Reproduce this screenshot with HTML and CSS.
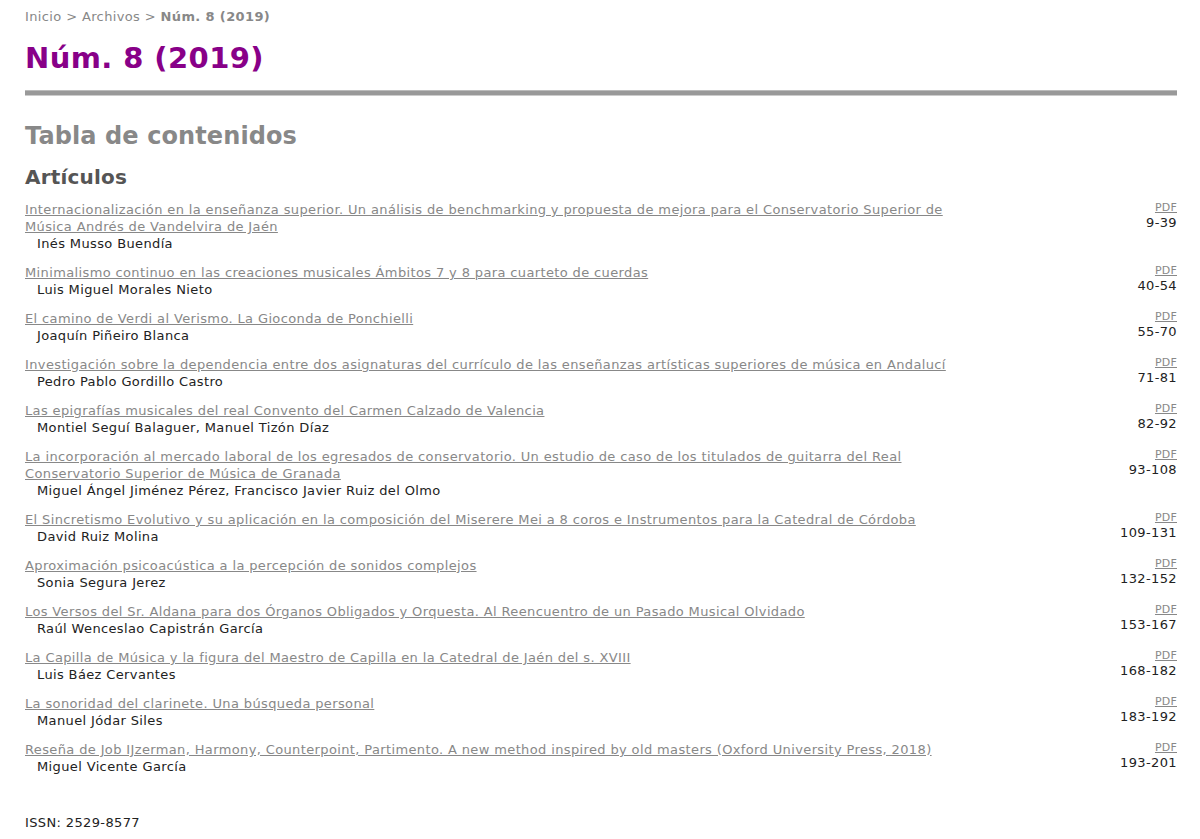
FILE: index.html
```html
<!DOCTYPE html>
<html lang="es">
<head>
<meta charset="utf-8">
<title>Núm. 8 (2019)</title>
<link rel="stylesheet" href="styles.css">
</head>
<body>
<div class="page">
  <div class="breadcrumb">
    <a href="#">Inicio</a> <span class="sep">&gt;</span> <a href="#">Archivos</a> <span class="sep">&gt;</span> <strong>Núm. 8 (2019)</strong>
  </div>
  <h1 class="issue-title">Núm. 8 (2019)</h1>
  <div class="rule"></div>
  <h2 class="toc-title">Tabla de contenidos</h2>
  <h3 class="section-title">Artículos</h3>

  <div class="articles">
    <div class="article">
      <div class="info"><a class="title" href="#">Internacionalización en la enseñanza superior. Un análisis de benchmarking y propuesta de mejora para el Conservatorio Superior de Música Andrés de Vandelvira de Jaén</a><div class="authors">Inés Musso Buendía</div></div>
      <div class="side"><a class="pdf" href="#">PDF</a><div class="pages">9-39</div></div>
    </div>
    <div class="article">
      <div class="info"><a class="title" href="#">Minimalismo continuo en las creaciones musicales Ámbitos 7 y 8 para cuarteto de cuerdas</a><div class="authors">Luis Miguel Morales Nieto</div></div>
      <div class="side"><a class="pdf" href="#">PDF</a><div class="pages">40-54</div></div>
    </div>
    <div class="article">
      <div class="info"><a class="title" href="#">El camino de Verdi al Verismo. La Gioconda de Ponchielli</a><div class="authors">Joaquín Piñeiro Blanca</div></div>
      <div class="side"><a class="pdf" href="#">PDF</a><div class="pages">55-70</div></div>
    </div>
    <div class="article">
      <div class="info"><a class="title" href="#">Investigación sobre la dependencia entre dos asignaturas del currículo de las enseñanzas artísticas superiores de música en Andalucí</a><div class="authors">Pedro Pablo Gordillo Castro</div></div>
      <div class="side"><a class="pdf" href="#">PDF</a><div class="pages">71-81</div></div>
    </div>
    <div class="article">
      <div class="info"><a class="title" href="#">Las epigrafías musicales del real Convento del Carmen Calzado de Valencia</a><div class="authors">Montiel Seguí Balaguer, Manuel Tizón Díaz</div></div>
      <div class="side"><a class="pdf" href="#">PDF</a><div class="pages">82-92</div></div>
    </div>
    <div class="article">
      <div class="info"><a class="title" href="#">La incorporación al mercado laboral de los egresados de conservatorio. Un estudio de caso de los titulados de guitarra del Real Conservatorio Superior de Música de Granada</a><div class="authors">Miguel Ángel Jiménez Pérez, Francisco Javier Ruiz del Olmo</div></div>
      <div class="side"><a class="pdf" href="#">PDF</a><div class="pages">93-108</div></div>
    </div>
    <div class="article">
      <div class="info"><a class="title" href="#">El Sincretismo Evolutivo y su aplicación en la composición del Miserere Mei a 8 coros e Instrumentos para la Catedral de Córdoba</a><div class="authors">David Ruiz Molina</div></div>
      <div class="side"><a class="pdf" href="#">PDF</a><div class="pages">109-131</div></div>
    </div>
    <div class="article">
      <div class="info"><a class="title" href="#">Aproximación psicoacústica a la percepción de sonidos complejos</a><div class="authors">Sonia Segura Jerez</div></div>
      <div class="side"><a class="pdf" href="#">PDF</a><div class="pages">132-152</div></div>
    </div>
    <div class="article">
      <div class="info"><a class="title" href="#">Los Versos del Sr. Aldana para dos Órganos Obligados y Orquesta. Al Reencuentro de un Pasado Musical Olvidado</a><div class="authors">Raúl Wenceslao Capistrán García</div></div>
      <div class="side"><a class="pdf" href="#">PDF</a><div class="pages">153-167</div></div>
    </div>
    <div class="article">
      <div class="info"><a class="title" href="#">La Capilla de Música y la figura del Maestro de Capilla en la Catedral de Jaén del s. XVIII</a><div class="authors">Luis Báez Cervantes</div></div>
      <div class="side"><a class="pdf" href="#">PDF</a><div class="pages">168-182</div></div>
    </div>
    <div class="article">
      <div class="info"><a class="title" href="#">La sonoridad del clarinete. Una búsqueda personal</a><div class="authors">Manuel Jódar Siles</div></div>
      <div class="side"><a class="pdf" href="#">PDF</a><div class="pages">183-192</div></div>
    </div>
    <div class="article">
      <div class="info"><a class="title" href="#">Reseña de Job IJzerman, Harmony, Counterpoint, Partimento. A new method inspired by old masters (Oxford University Press, 2018)</a><div class="authors">Miguel Vicente García</div></div>
      <div class="side"><a class="pdf" href="#">PDF</a><div class="pages">193-201</div></div>
    </div>
  </div>

  <div class="issn">ISSN: 2529-8577</div>
</div>
</body>
</html>
```

FILE: styles.css
```css
html, body {
  margin: 0;
  padding: 0;
  background: #ffffff;
}

body {
  font-family: "DejaVu Sans", Verdana, sans-serif;
  font-size: 13px;
  letter-spacing: 0.37px;
  color: #222222;
}

.page {
  width: 1152px;
  margin-left: 25px;
  padding-top: 9px;
}

.breadcrumb {
  font-size: 13px;
  line-height: 16px;
  color: #888888;
}

.breadcrumb a {
  color: #888888;
  text-decoration: none;
}

.breadcrumb strong {
  font-weight: bold;
}

.issue-title {
  margin: 16px 0 0 0;
  font-size: 29px;
  line-height: 34px;
  font-weight: bold;
  letter-spacing: 0.4px;
  color: #880088;
}

.rule {
  margin-top: 15px;
  height: 4px;
  background: #999999;
  border-top: 1px solid #bbbbbb;
  border-bottom: 1px solid #cccccc;
}

.toc-title {
  margin: 25px 0 0 0;
  font-size: 24px;
  line-height: 30px;
  font-weight: bold;
  letter-spacing: 0.1px;
  color: #888888;
}

.section-title {
  margin: 14px 0 0 0;
  font-size: 20px;
  line-height: 24px;
  font-weight: bold;
  letter-spacing: 0.2px;
  color: #555555;
}

.articles {
  margin-top: 12px;
  display: flex;
  flex-direction: column;
  gap: 12px;
}

.article {
  display: flex;
  justify-content: space-between;
  align-items: flex-start;
}

.info {
  width: 922px;
  line-height: 17px;
}

.title {
  color: #888888;
  text-decoration: underline;
}

.authors {
  padding-left: 12px;
  color: #222222;
  line-height: 17px;
}

.side {
  text-align: right;
  display: flex;
  flex-direction: column;
  align-items: flex-end;
}

.pdf {
  font-size: 11px;
  line-height: 14px;
  letter-spacing: 0.2px;
  color: #888888;
  text-decoration: underline;
}

.pages {
  font-size: 13px;
  line-height: 16px;
  color: #222222;
}

.issn {
  margin-top: 40px;
  line-height: 16px;
  color: #222222;
}
```
